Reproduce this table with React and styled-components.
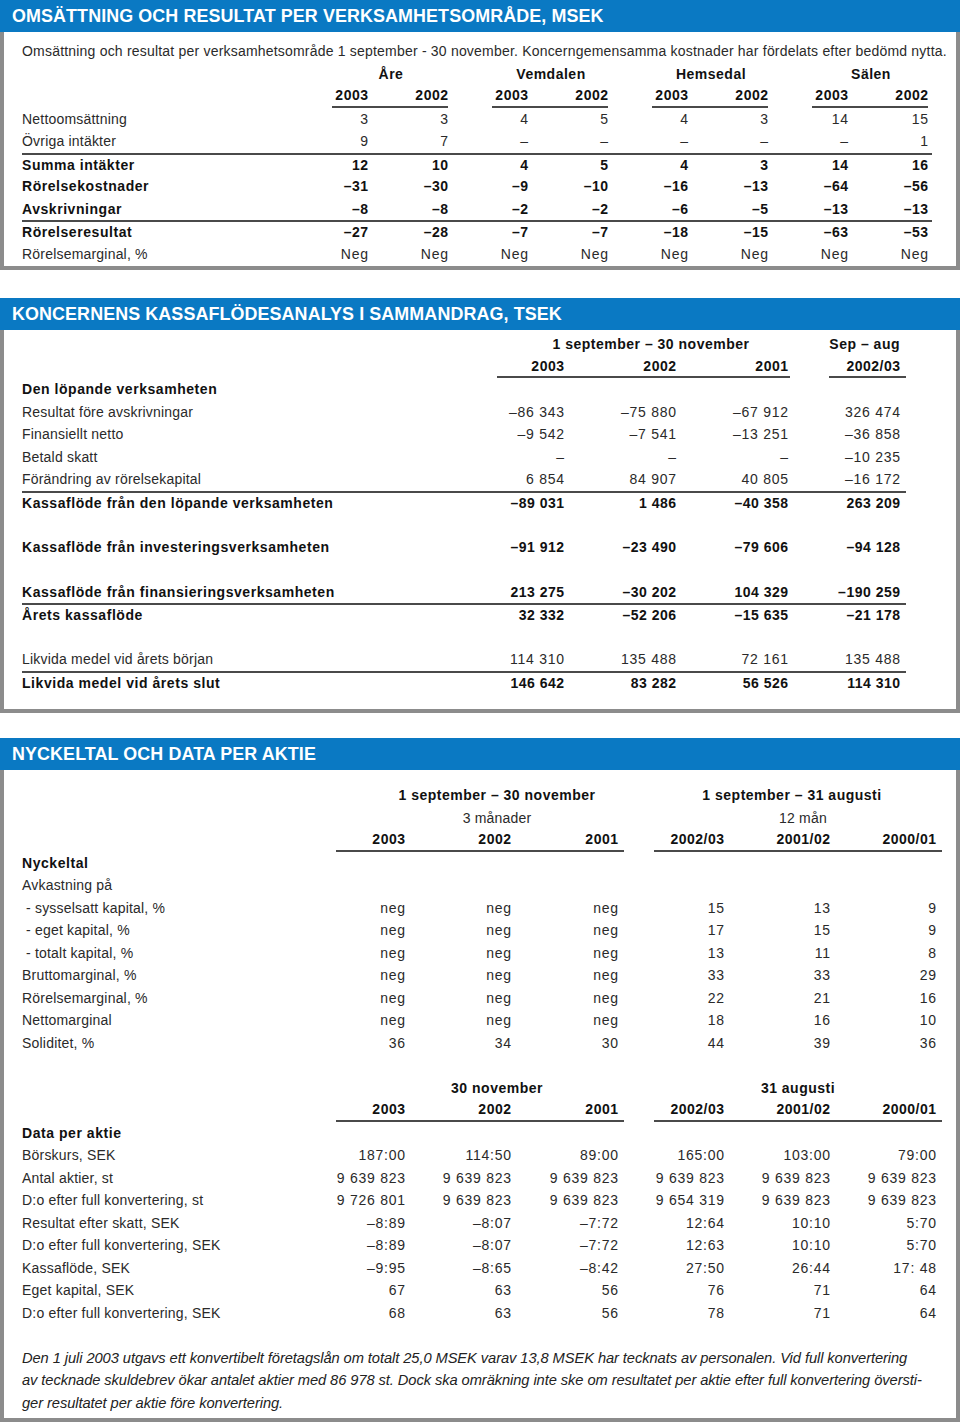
import React from 'react';
import styled, { createGlobalStyle } from 'styled-components';

const GlobalStyle = createGlobalStyle`
  body {
    margin: 0;
    background: #fff;
    font-family: "Liberation Sans", Arial, Helvetica, sans-serif;
    font-size: 14px;
    color: #2a2a2a;
  }
`;

const Page = styled.div`
  width: 960px;
  display: flex;
  flex-direction: column;
`;

const Panel = styled.section`
  margin-top: ${p => p.$top}px;
`;

const Title = styled.h2`
  margin: 0;
  height: 32px;
  padding-left: 12px;
  background: #0a79c3;
  color: #fff;
  font-size: 17.9px;
  font-weight: 700;
  line-height: 33px;
  letter-spacing: 0.1px;
`;

const Body = styled.div`
  border: 4px solid #8c8c8c;
  border-top: none;
  padding: ${p => p.$pt}px 0 ${p => p.$pb}px 18px;
`;

const Row = styled.div`
  display: grid;
  grid-template-columns: ${p => p.$cols};
  align-items: center;
  height: 22.5px;
  box-sizing: border-box;
  margin-right: ${p => p.$inset}px;
  border-top: ${p => (p.$rule ? '2px solid #4a4a4a' : '0')};
  font-weight: ${p => (p.$bold ? 700 : 400)};
  color: ${p => (p.$bold ? '#111' : '#2a2a2a')};
  white-space: nowrap;
`;

const Label = styled.div`
  padding-left: ${p => p.$indent || 0}px;
  letter-spacing: ${p => (p.$bold ? 0.55 : 0.2)}px;
`;

const Num = styled.div`
  text-align: right;
  padding-right: ${p => p.$pad || 0}px;
  letter-spacing: ${p => (p.$bold ? 0.5 : 0.75)}px;
  margin-right: ${p => (p.$bold ? -0.5 : -0.75)}px;
`;

const Group = styled.div`
  grid-column: ${p => p.$span || 'auto'};
  align-self: stretch;
  display: grid;
  grid-template-columns: ${p => p.$cols || '1fr'};
  align-items: center;
  margin: 0 ${p => p.$mr || 0}px 0 ${p => p.$ml || 0}px;
  border-bottom: ${p => (p.$line ? '2px solid #4a4a4a' : '0')};
  font-weight: ${p => (p.$light ? 400 : 700)};
  color: ${p => (p.$light ? '#2a2a2a' : '#111')};
`;

const Caption = styled.div`
  text-align: ${p => p.$align || 'center'};
  padding-left: ${p => Math.max(0, p.$shift || 0) * 2}px;
  padding-right: ${p => (p.$pr || 0) + Math.max(0, -(p.$shift || 0)) * 2}px;
  letter-spacing: ${p => (p.$light ? 0.2 : 0.5)}px;
`;

const Note = styled.p`
  margin: 22.5px 0 0;
  font-style: italic;
  font-size: 14.7px;
  line-height: 22.5px;
  letter-spacing: -0.08px;
  color: #222;
  white-space: nowrap;
`;

const n = (s, c) => Array(c).fill(s);

/* ---------- Omsättning och resultat ---------- */

const S1_COLS = '1fr repeat(8, 80px) 4px';
const S1_HEAD = '1fr repeat(4, 160px) 4px';
const S1_INSET = 24;
const areas = ['Åre', 'Vemdalen', 'Hemsedal', 'Sälen'];

const s1Rows = [
  { label: 'Nettoomsättning', v: ['3', '3', '4', '5', '4', '3', '14', '15'] },
  { label: 'Övriga intäkter', v: ['9', '7', '–', '–', '–', '–', '–', '1'] },
  { label: 'Summa intäkter', bold: true, rule: true, v: ['12', '10', '4', '5', '4', '3', '14', '16'] },
  { label: 'Rörelsekostnader', bold: true, v: ['–31', '–30', '–9', '–10', '–16', '–13', '–64', '–56'] },
  { label: 'Avskrivningar', bold: true, v: ['–8', '–8', '–2', '–2', '–6', '–5', '–13', '–13'] },
  { label: 'Rörelseresultat', bold: true, rule: true, v: ['–27', '–28', '–7', '–7', '–18', '–15', '–63', '–53'] },
  { label: 'Rörelsemarginal, %', v: n('Neg', 8) },
];

function Omsattning() {
  return (
    <Panel $top={0}>
      <Title>OMSÄTTNING OCH RESULTAT PER VERKSAMHETSOMRÅDE, MSEK</Title>
      <Body $pt={8} $pb={1}>
        <Row $cols="1fr" $inset={0}>
          <Label>
            Omsättning och resultat per verksamhetsområde 1 september - 30 november. Koncerngemensamma kostnader har fördelats efter bedömd nytta.
          </Label>
        </Row>
        <Row $cols={S1_HEAD} $inset={S1_INSET}>
          <div />
          {areas.map(a => (
            <Group key={a} $ml={44}>
              <Caption $shift={1}>{a}</Caption>
            </Group>
          ))}
        </Row>
        <Row $cols={S1_HEAD} $inset={S1_INSET}>
          <div />
          {areas.map(a => (
            <Group key={a} $ml={44} $cols="36px 80px" $line>
              <Num $bold>2003</Num>
              <Num $bold>2002</Num>
            </Group>
          ))}
        </Row>
        {s1Rows.map(r => (
          <Row key={r.label} $cols={S1_COLS} $inset={S1_INSET} $rule={r.rule} $bold={r.bold}>
            <Label $bold={r.bold}>{r.label}</Label>
            {r.v.map((x, i) => (
              <Num key={i} $bold={r.bold}>{x}</Num>
            ))}
          </Row>
        ))}
      </Body>
    </Panel>
  );
}

/* ---------- Kassaflödesanalys ---------- */

const S2_COLS = '1fr 112px 112px 112px 112px 6px';
const S2_INSET = 50;

const s2Rows = [
  { label: 'Den löpande verksamheten', bold: true, v: [] },
  { label: 'Resultat före avskrivningar', v: ['–86 343', '–75 880', '–67 912', '326 474'] },
  { label: 'Finansiellt netto', v: ['–9 542', '–7 541', '–13 251', '–36 858'] },
  { label: 'Betald skatt', v: ['–', '–', '–', '–10 235'] },
  { label: 'Förändring av rörelsekapital', v: ['6 854', '84 907', '40 805', '–16 172'] },
  { label: 'Kassaflöde från den löpande verksamheten', bold: true, rule: true, v: ['–89 031', '1 486', '–40 358', '263 209'] },
  { blank: true },
  { label: 'Kassaflöde från investeringsverksamheten', bold: true, v: ['–91 912', '–23 490', '–79 606', '–94 128'] },
  { blank: true },
  { label: 'Kassaflöde från finansieringsverksamheten', bold: true, v: ['213 275', '–30 202', '104 329', '–190 259'] },
  { label: 'Årets kassaflöde', bold: true, rule: true, v: ['32 332', '–52 206', '–15 635', '–21 178'] },
  { blank: true },
  { label: 'Likvida medel vid årets början', v: ['114 310', '135 488', '72 161', '135 488'] },
  { label: 'Likvida medel vid årets slut', bold: true, rule: true, v: ['146 642', '83 282', '56 526', '114 310'] },
];

function Kassaflode() {
  return (
    <Panel $top={28}>
      <Title>KONCERNENS KASSAFLÖDESANALYS I SAMMANDRAG, TSEK</Title>
      <Body $pt={3} $pb={16}>
        <Row $cols={S2_COLS} $inset={S2_INSET}>
          <div />
          <Group $span="2 / 5" $ml={45} $mr={-2}>
            <Caption $shift={7.5}>1 september – 30 november</Caption>
          </Group>
          <Group $span="5 / 7" $ml={41}>
            <Caption $align="right" $pr={6}>Sep – aug</Caption>
          </Group>
        </Row>
        <Row $cols={S2_COLS} $inset={S2_INSET}>
          <div />
          <Group $span="2 / 5" $ml={45} $mr={-2} $cols="1fr 112px 112px 2px" $line>
            <Num $bold>2003</Num>
            <Num $bold>2002</Num>
            <Num $bold>2001</Num>
          </Group>
          <Group $span="5 / 7" $ml={41} $cols="1fr 6px" $line>
            <Num $bold>2002/03</Num>
          </Group>
        </Row>
        {s2Rows.map((r, k) =>
          r.blank ? (
            <Row key={k} $cols="1fr" $inset={S2_INSET} />
          ) : (
            <Row key={k} $cols={S2_COLS} $inset={S2_INSET} $rule={r.rule} $bold={r.bold}>
              <Label $bold={r.bold}>{r.label}</Label>
              {r.v.map((x, i) => (
                <Num key={i} $bold={r.bold}>{x}</Num>
              ))}
            </Row>
          )
        )}
      </Body>
    </Panel>
  );
}

/* ---------- Nyckeltal och data per aktie ---------- */

const S3_COLS = '1fr 75px 106px 107px 30px 76px 106px 106px';
const S3_INSET = 14;
const years3 = ['2003', '2002', '2001'];
const years12 = ['2002/03', '2001/02', '2000/01'];

const nyckeltal = [
  { label: 'Nyckeltal', bold: true },
  { label: 'Avkastning på' },
  { label: '- sysselsatt kapital, %', indent: 4, v: [...n('neg', 3), '15', '13', '9'] },
  { label: '- eget kapital, %', indent: 4, v: [...n('neg', 3), '17', '15', '9'] },
  { label: '- totalt kapital, %', indent: 4, v: [...n('neg', 3), '13', '11', '8'] },
  { label: 'Bruttomarginal, %', v: [...n('neg', 3), '33', '33', '29'] },
  { label: 'Rörelsemarginal, %', v: [...n('neg', 3), '22', '21', '16'] },
  { label: 'Nettomarginal', v: [...n('neg', 3), '18', '16', '10'] },
  { label: 'Soliditet, %', v: ['36', '34', '30', '44', '39', '36'] },
];

const perAktie = [
  { label: 'Data per aktie', bold: true },
  { label: 'Börskurs, SEK', v: ['187:00', '114:50', '89:00', '165:00', '103:00', '79:00'] },
  { label: 'Antal aktier, st', v: n('9 639 823', 6) },
  { label: 'D:o efter full konvertering, st', v: ['9 726 801', '9 639 823', '9 639 823', '9 654 319', '9 639 823', '9 639 823'] },
  { label: 'Resultat efter skatt, SEK', v: ['–8:89', '–8:07', '–7:72', '12:64', '10:10', '5:70'] },
  { label: 'D:o efter full konvertering, SEK', v: ['–8:89', '–8:07', '–7:72', '12:63', '10:10', '5:70'] },
  { label: 'Kassaflöde, SEK', v: ['–9:95', '–8:65', '–8:42', '27:50', '26:44', '17: 48'] },
  { label: 'Eget kapital, SEK', v: ['67', '63', '56', '76', '71', '64'] },
  { label: 'D:o efter full konvertering, SEK', v: ['68', '63', '56', '78', '71', '64'] },
];

function HeadPair({ left, right, light }) {
  return (
    <Row $cols={S3_COLS} $inset={S3_INSET}>
      <div />
      <Group $span="2 / 5" $light={light}>
        <Caption $shift={left[1]} $light={light}>{left[0]}</Caption>
      </Group>
      <Group $span="6 / 9" $light={light}>
        <Caption $shift={right[1]} $light={light}>{right[0]}</Caption>
      </Group>
    </Row>
  );
}

function YearRow() {
  return (
    <Row $cols={S3_COLS} $inset={S3_INSET}>
      <div />
      <Group $span="2 / 5" $cols="75px 106px 107px" $line>
        {years3.map(y => (
          <Num key={y} $bold $pad={6}>{y}</Num>
        ))}
      </Group>
      <Group $span="6 / 9" $cols="76px 106px 106px" $line>
        {years12.map(y => (
          <Num key={y} $bold $pad={6}>{y}</Num>
        ))}
      </Group>
    </Row>
  );
}

function DataRows({ rows }) {
  return rows.map(r => (
    <Row key={r.label + (r.v ? r.v[0] : '')} $cols={S3_COLS} $inset={S3_INSET} $bold={r.bold}>
      <Label $bold={r.bold} $indent={r.indent}>{r.label}</Label>
      {(r.v || []).slice(0, 3).map((x, i) => (
        <Num key={i} $pad={6}>{x}</Num>
      ))}
      {r.v && <div />}
      {(r.v || []).slice(3).map((x, i) => (
        <Num key={i} $pad={6}>{x}</Num>
      ))}
    </Row>
  ));
}

function Nyckeltal() {
  return (
    <Panel $top={25}>
      <Title>NYCKELTAL OCH DATA PER AKTIE</Title>
      <Body $pt={14} $pb={4}>
        <HeadPair left={['1 september – 30 november', 17]} right={['1 september – 31 augusti', -6]} />
        <HeadPair light left={['3 månader', 17]} right={['12 mån', 5]} />
        <YearRow />
        <DataRows rows={nyckeltal} />
        <Row $cols="1fr" $inset={S3_INSET} />
        <HeadPair left={['30 november', 17]} right={['31 augusti', 0]} />
        <YearRow />
        <DataRows rows={perAktie} />
        <Note>
          Den 1 juli 2003 utgavs ett konvertibelt företagslån om totalt 25,0 MSEK varav 13,8 MSEK har tecknats av personalen. Vid full konvertering
          <br />
          av tecknade skuldebrev ökar antalet aktier med 86 978 st. Dock ska omräkning inte ske om resultatet per aktie efter full konvertering översti-
          <br />
          ger resultatet per aktie före konvertering.
        </Note>
      </Body>
    </Panel>
  );
}

export default function App() {
  return (
    <>
      <GlobalStyle />
      <Page>
        <Omsattning />
        <Kassaflode />
        <Nyckeltal />
      </Page>
    </>
  );
}
